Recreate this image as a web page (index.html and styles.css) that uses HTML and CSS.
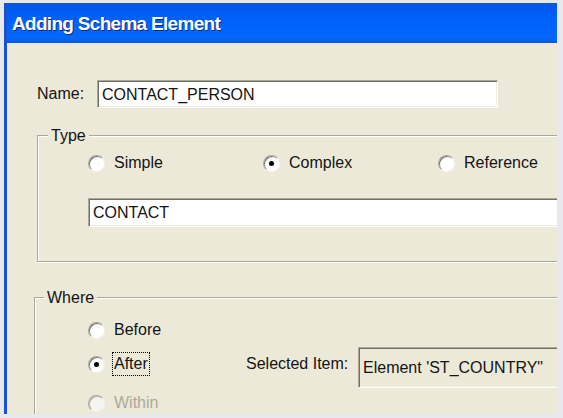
FILE: index.html
```html
<!DOCTYPE html>
<html>
<head>
<meta charset="utf-8">
<link rel="stylesheet" href="styles.css">
</head>
<body>
<div class="frame">
  <div class="titlebar"><span class="title">Adding Schema Element</span></div>
  <div class="client">
    <div class="name-row">
      <span class="label name-label">Name:</span>
      <div class="textbox name-box">CONTACT_PERSON</div>
    </div>
    <fieldset class="group type-group">
      <legend>Type</legend>
      <div class="group-body type-body">
        <div class="radio-row">
          <div class="option"><span class="radio"></span><span class="opt-label">Simple</span></div>
          <div class="option"><span class="radio checked"></span><span class="opt-label">Complex</span></div>
          <div class="option"><span class="radio"></span><span class="opt-label">Reference</span></div>
        </div>
        <div class="textbox type-box">CONTACT</div>
      </div>
    </fieldset>
    <fieldset class="group where-group">
      <legend>Where</legend>
      <div class="group-body where-body">
        <div class="where-row">
          <div class="option"><span class="radio"></span><span class="opt-label">Before</span></div>
        </div>
        <div class="where-row after-row">
          <div class="option after-opt"><span class="radio checked"></span><span class="opt-label focused">After</span></div>
          <span class="label sel-label">Selected Item:</span>
          <div class="textbox readonly sel-box">Element 'ST_COUNTRY"</div>
        </div>
        <div class="where-row within-row">
          <div class="option disabled"><span class="radio"></span><span class="opt-label">Within</span></div>
        </div>
      </div>
    </fieldset>
  </div>
</div>
</body>
</html>
```
FILE: styles.css
```css
html, body {
  margin: 0;
  padding: 0;
}
body {
  width: 563px;
  height: 418px;
  background: #e9e9ec;
  overflow: hidden;
  font-family: "Liberation Sans", Arial, sans-serif;
  font-size: 16px;
  color: #141414;
}
.frame {
  box-sizing: border-box;
  margin: 3px 6px 0 4px;
  width: 553px;
  height: 411px;
  display: flex;
  flex-direction: column;
  border-left: 3px solid #1553d4;
  overflow: hidden;
}
.titlebar {
  height: 40px;
  flex: none;
  display: flex;
  align-items: center;
  padding: 2px 0 0 5px;
  box-sizing: border-box;
  background: linear-gradient(to bottom, #0a56e4 0%, #005cf2 20%, #0064fc 55%, #0468fb 88%, #0b55d6 100%);
}
.title {
  font-family: "Liberation Sans", Arial, sans-serif;
  font-weight: bold;
  font-size: 19px;
  letter-spacing: -0.7px;
  color: #fff;
  text-shadow: 1px 1px 0 #0a2a86;
}
.client {
  flex: 1;
  background: #ece9d8;
  overflow: hidden;
  padding: 37px 0 0 27px;
  box-sizing: border-box;
}
.name-row {
  display: flex;
  align-items: center;
  margin-left: 3px;
}
.name-label {
  width: 60px;
}
.textbox {
  box-sizing: border-box;
  background: #fff;
  border: 1px solid;
  border-color: #aca899 #fff #fff #aca899;
  box-shadow: inset 1px 1px 0 #716f64, inset -1px -1px 0 #f1efe2;
  display: flex;
  align-items: center;
  padding: 1px 0 0 4px;
  white-space: nowrap;
}
.name-box {
  width: 401px;
  height: 28px;
}
.group {
  margin: 0;
  padding: 0;
  width: 600px;
  box-sizing: border-box;
  border: 1px solid #aca899;
  box-shadow: 1px 1px 0 #fff, inset 1px 1px 0 #fff;
  min-inline-size: 0;
}
.group legend {
  padding: 0 3px;
  line-height: 17px;
  background: #ece9d8;
}
.type-group {
  margin-top: 19px;
  margin-left: 3px;
}
.type-group legend {
  margin-left: 10px;
}
.where-group {
  margin-top: 27px;
}
.where-group legend {
  margin-left: 9px;
}
.type-body {
  padding: 7px 0 34px 50px;
}
.radio-row {
  display: flex;
}
.radio-row .option {
  width: 175px;
}
.option {
  display: flex;
  align-items: center;
  flex: none;
}
.radio {
  position: relative;
  width: 17px;
  height: 17px;
  box-sizing: border-box;
  border-radius: 50%;
  border: 1px solid;
  border-color: #a7a59b #f4f3ee #f4f3ee #a7a59b;
  background: #fff;
  box-shadow: inset 1px 1px 0 #76746b;
  flex: none;
}
.radio.checked::after {
  content: "";
  position: absolute;
  left: 5px;
  top: 5px;
  width: 5px;
  height: 5px;
  border-radius: 50%;
  background: #000;
}
.opt-label {
  margin-left: 7px;
  padding: 2px 1px;
  line-height: 18px;
  border: 1px dotted transparent;
}
.opt-label.focused {
  border-color: #000;
}
.type-box {
  margin-top: 23px;
  height: 29px;
  width: 520px;
}
.where-body {
  padding: 7px 0 0 53px;
}
.where-row {
  height: 34px;
  display: flex;
  align-items: center;
}
.after-opt {
  width: 158px;
}
.sel-label {
  width: 112px;
  flex: none;
}
.readonly {
  background: #ece9d8;
}
.sel-box {
  align-self: flex-start;
  height: 41px;
  width: 260px;
  flex: none;
}
.within-row {
  margin-top: 5px;
}
.disabled .opt-label {
  color: #aca899;
}
.disabled .radio {
  background: #f5f4ef;
  box-shadow: inset 1px 1px 0 #b9b7ad;
}
```
